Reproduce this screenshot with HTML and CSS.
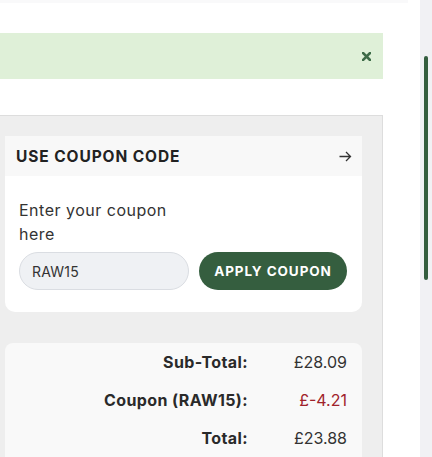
FILE: index.html
```html
<!DOCTYPE html>
<html>
<head>
<meta charset="utf-8">
<link rel="stylesheet" href="styles.css">
</head>
<body>
<div class="page">
  <div class="main">
    <div class="topstrip"></div>
    <div class="alert">
      <svg class="close" width="9" height="9" viewBox="0 0 9 9"><path d="M1 1L8 8M8 1L1 8" stroke="#3d6b47" stroke-width="2.6" stroke-linecap="square"/></svg>
    </div>
    <div class="panel">
      <div class="coupon">
        <div class="coupon-head">
          <span class="coupon-title">USE COUPON CODE</span>
          <svg class="arrow" width="13" height="11" viewBox="0 0 13 11"><path d="M0.5 5.5H11.5M7 1L11.5 5.5L7 10" fill="none" stroke="#333" stroke-width="1.3"/></svg>
        </div>
        <div class="coupon-body">
          <div class="coupon-label">Enter your coupon here</div>
          <div class="coupon-row">
            <div class="coupon-input">RAW15</div>
            <div class="coupon-btn">APPLY COUPON</div>
          </div>
        </div>
      </div>
      <div class="totals">
        <div class="t-label">Sub-Total:</div><div class="t-value">£28.09</div>
        <div class="t-label">Coupon (RAW15):</div><div class="t-value neg">£-4.21</div>
        <div class="t-label">Total:</div><div class="t-value">£23.88</div>
      </div>
    </div>
  </div>
  <div class="gutter"><div class="gutter-strip"></div></div>
  <div class="scrollbar"><div class="thumb"></div></div>
</div>
</body>
</html>
```
FILE: styles.css
```css
html, body {
  margin: 0;
  padding: 0;
  background: #fff;
  font-family: "Inter", "Open Sans", sans-serif;
  color: #333;
}
.page {
  display: flex;
  height: 457px;
  overflow: hidden;
}
.main {
  width: 383px;
  display: flex;
  flex-direction: column;
}
.topstrip {
  height: 3px;
  background: #f9f9fa;
}
.alert {
  margin-top: 30px;
  height: 46px;
  background: #dff0d8;
  display: flex;
  align-items: center;
  justify-content: flex-end;
  padding-right: 12px;
}
.close { display: block; }
.panel {
  margin-top: 36px;
  flex: 1;
  background: #eeeeee;
  border-top: 1px solid #dddddd;
  border-right: 1px solid #dddddd;
  padding: 20px 20px 0 5px;
  display: flex;
  flex-direction: column;
  gap: 31px;
}
.coupon-head {
  height: 40px;
  background: #f8f8f8;
  display: flex;
  align-items: center;
  justify-content: space-between;
  padding: 0 10px 0 11px;
}
.coupon-title {
  font-weight: 700;
  font-size: 15.5px;
  letter-spacing: 0.9px;
  color: #222;
}
.arrow { display: block; }
.coupon-body {
  background: #fff;
  border-radius: 0 0 10px 10px;
  padding: 22px 15px 22px 14px;
}
.coupon-label {
  font-size: 16px;
  line-height: 24px;
  width: 170px;
  letter-spacing: 0.5px;
  color: #333;
  margin-bottom: 6px;
}
.coupon-row {
  display: flex;
  gap: 10px;
}
.coupon-input {
  width: 170px;
  height: 38px;
  box-sizing: border-box;
  border: 1px solid #dadde2;
  border-radius: 19px;
  background: #eff1f4;
  padding-left: 12px;
  display: flex;
  align-items: center;
  font-size: 14px;
  letter-spacing: 0.2px;
  color: #333;
}
.coupon-btn {
  width: 148px;
  height: 38px;
  border-radius: 19px;
  background: #355e3f;
  color: #fff;
  font-weight: 700;
  font-size: 13.5px;
  display: flex;
  align-items: center;
  justify-content: center;
  letter-spacing: 0.9px;
}
.totals {
  flex: 1;
  background: #f9f9f9;
  border-radius: 8px 8px 0 0;
  display: grid;
  grid-template-columns: 1fr 99px;
  grid-auto-rows: 38px;
  align-items: center;
  padding-right: 15px;
  font-size: 16px;
  align-content: start;
}
.t-label {
  text-align: right;
  font-weight: 700;
  color: #2a2a2a;
  letter-spacing: 0.4px;
}
.t-value {
  text-align: right;
  color: #333;
}
.t-value.neg { color: #a0222b; }
.gutter {
  width: 37px;
  display: flex;
  flex-direction: column;
}
.gutter-strip {
  height: 3px;
  width: 25px;
  background: #f9f9fa;
}
.scrollbar {
  width: 12px;
  background: #f1f1f4;
  padding-top: 56px;
  box-sizing: border-box;
}
.thumb {
  width: 4px;
  height: 224px;
  margin-left: 4px;
  background: #355e3f;
  border-radius: 2px;
}
```
